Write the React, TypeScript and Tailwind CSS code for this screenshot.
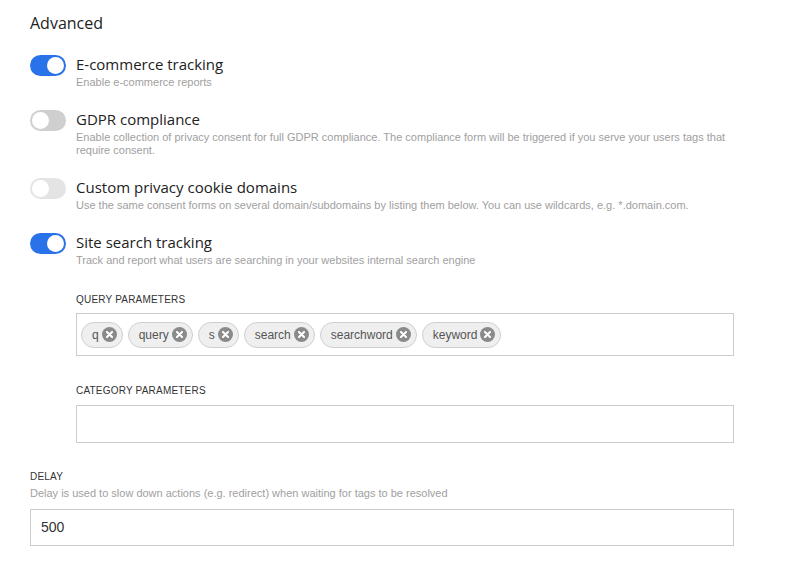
import React from 'react';

const titleFont = { fontFamily: '"Open Sans", "DejaVu Sans", sans-serif' };
const bodyFont = { fontFamily: '"Liberation Sans", Arial, sans-serif' };

const Toggle: React.FC<{ on: boolean; disabled?: boolean }> = ({ on, disabled }) => (
  <div
    className={`relative w-[36px] h-[21px] rounded-full shrink-0 ${
      on ? 'bg-[#2a72ea]' : disabled ? 'bg-[#e4e4e4]' : 'bg-[#cfcfcf]'
    }`}
  >
    <div
      className={`absolute top-[2px] w-[17px] h-[17px] rounded-full bg-white ${on ? 'left-[17px]' : 'left-[2px]'}`}
    />
  </div>
);

const Setting: React.FC<{ on: boolean; disabled?: boolean; title: string; desc: string }> = ({
  on,
  disabled,
  title,
  desc,
}) => (
  <div className="flex gap-[10px]">
    <Toggle on={on} disabled={disabled} />
    <div className="-mt-[1px] w-[660px]">
      <div className="text-[15px] leading-[20px] text-[#222]" style={titleFont}>
        {title}
      </div>
      <div className="text-[11px] leading-[13px] text-[#a0a0a0] mt-[2px]" style={bodyFont}>
        {desc}
      </div>
    </div>
  </div>
);

const Chip: React.FC<{ label: string }> = ({ label }) => (
  <div className="flex items-center h-[26px] pl-[10px] pr-[5px] rounded-full bg-[#efefef] border border-[#cfcfcf]">
    <span className="text-[12px] text-[#555]" style={bodyFont}>
      {label}
    </span>
    <svg width="15" height="15" viewBox="0 0 16 16" className="ml-[3px]">
      <circle cx="8" cy="8" r="8" fill="#8a8a8a" />
      <path d="M5.3 5.3 L10.7 10.7 M10.7 5.3 L5.3 10.7" stroke="#fff" strokeWidth="2.2" strokeLinecap="round" />
    </svg>
  </div>
);

const Label: React.FC<{ children: React.ReactNode }> = ({ children }) => (
  <div className="text-[10px] tracking-[0.2px] text-[#333] uppercase" style={bodyFont}>
    {children}
  </div>
);

export default function App() {
  return (
    <div className="w-[789px] h-[587px] bg-white pl-[30px] pt-[12px]">
      <h2 className="text-[16px] text-[#222] leading-[22px]" style={titleFont}>
        Advanced
      </h2>

      <div className="mt-[21px] flex flex-col">
        <Setting on title="E-commerce tracking" desc="Enable e-commerce reports" />
        <div className="mt-[21px]">
          <Setting
            on={false}
            title="GDPR compliance"
            desc={
              'Enable collection of privacy consent for full GDPR compliance. The compliance form will be triggered if you serve your users tags that require consent.'
            }
          />
        </div>
        <div className="mt-[21px]">
          <Setting
            on={false}
            disabled
            title="Custom privacy cookie domains"
            desc="Use the same consent forms on several domain/subdomains by listing them below. You can use wildcards, e.g. *.domain.com."
          />
        </div>
        <div className="mt-[21px]">
          <Setting
            on
            title="Site search tracking"
            desc="Track and report what users are searching in your websites internal search engine"
          />
        </div>
      </div>

      <div className="ml-[46px] w-[658px] mt-[25px]">
        <Label>Query parameters</Label>
        <div className="mt-[6px] h-[43px] border border-[#cccccc] flex items-center gap-[5px] px-[4px]">
          {['q', 'query', 's', 'search', 'searchword', 'keyword'].map((c) => (
            <Chip key={c} label={c} />
          ))}
        </div>

        <div className="mt-[27px]">
          <Label>Category parameters</Label>
        </div>
        <div className="mt-[7px] h-[38px] border border-[#cccccc]" />
      </div>

      <div className="w-[704px] mt-[26px]">
        <Label>Delay</Label>
        <div className="text-[11px] text-[#a0a0a0] mt-[1px]" style={bodyFont}>
          Delay is used to slow down actions (e.g. redirect) when waiting for tags to be resolved
        </div>
        <div
          className="mt-[7px] h-[37px] border border-[#cccccc] flex items-center px-[10px] text-[14px] text-[#333]"
          style={bodyFont}
        >
          500
        </div>
      </div>
    </div>
  );
}
